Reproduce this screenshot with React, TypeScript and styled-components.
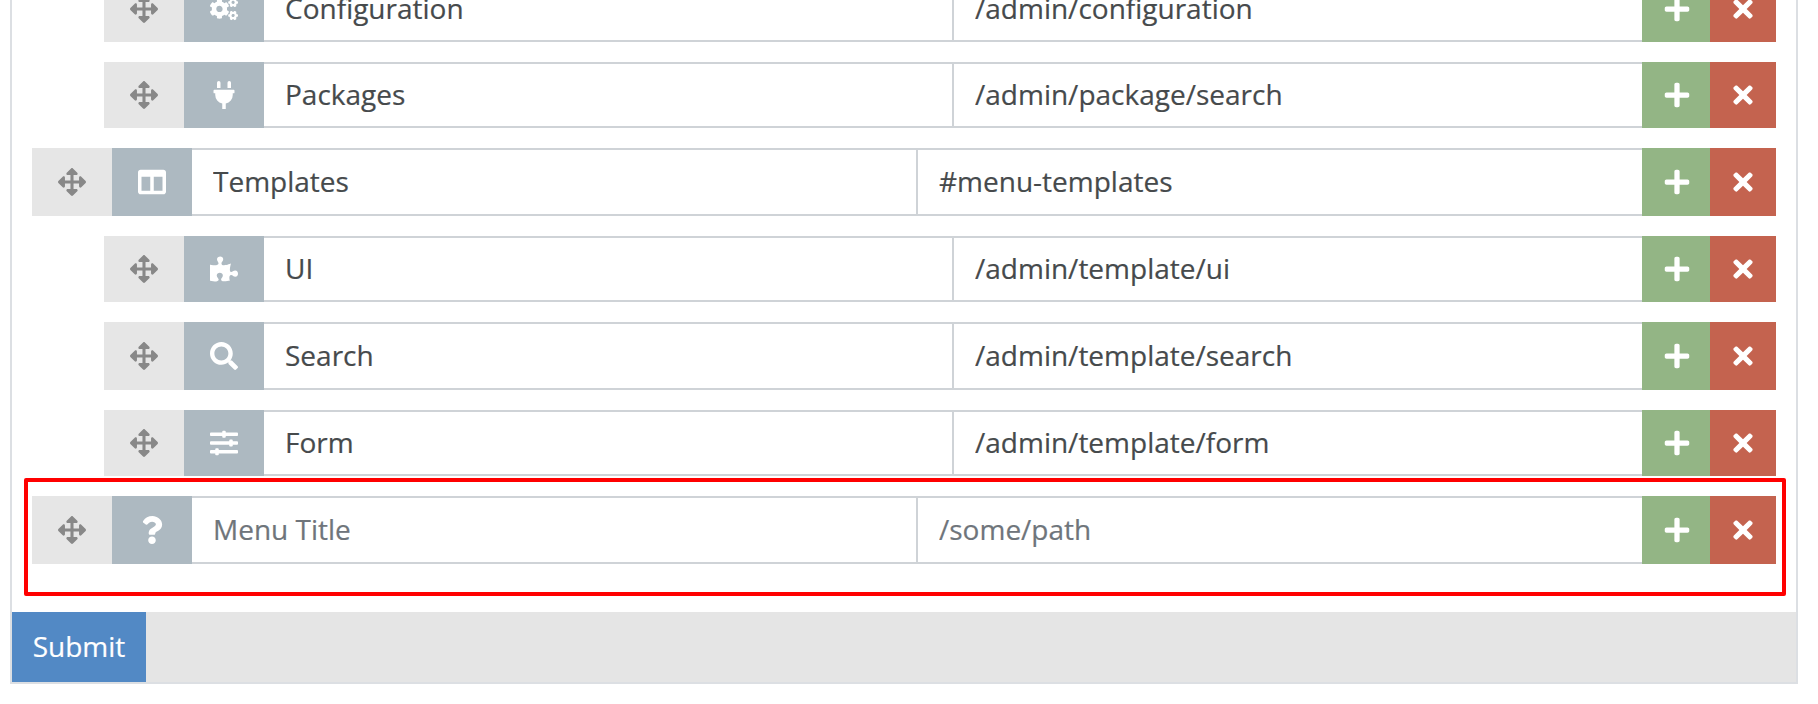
import React from "react";
import styled, { createGlobalStyle } from "styled-components";
import {
  FaArrowsAlt,
  FaCogs,
  FaPlug,
  FaColumns,
  FaPuzzlePiece,
  FaSearch,
  FaSlidersH,
  FaQuestion,
  FaPlus,
  FaTimes,
} from "react-icons/fa";

const Global = createGlobalStyle`
  html, body { margin: 0; padding: 0; height: 704px; overflow: hidden; background: #fff; }
  * { box-sizing: border-box; }
  body { font-family: "Open Sans", "Liberation Sans", sans-serif; }
`;

const Panel = styled.form`
  width: 1788px;
  margin: -24px 0 0 10px;
  border: solid #dcdfe3;
  border-width: 0 2px 2px 2px;
  background: #fff;
`;

const List = styled.div`
  display: flex;
  flex-direction: column;
  gap: 20px;
  padding: 0 20px;
`;

const Row = styled.div<{ $nested?: boolean; $tall?: boolean }>`
  display: flex;
  align-items: stretch;
  height: ${(p) => (p.$tall ? 68 : 66)}px;
  margin-left: ${(p) => (p.$nested ? 72 : 0)}px;
`;

const Handle = styled.div`
  flex: 0 0 80px;
  display: flex;
  align-items: center;
  justify-content: center;
  background: #e6e6e6;
  color: #888888;
  font-size: 28px;
`;

const IconBox = styled.div`
  flex: 0 0 80px;
  display: flex;
  align-items: center;
  justify-content: center;
  background: #adb9c1;
  color: #fff;
  font-size: 28px;
`;

const Fields = styled.div`
  flex: 1;
  min-width: 0;
  display: grid;
  grid-template-columns: 1fr 1fr;
`;

const Field = styled.input<{ $second?: boolean }>`
  width: 100%;
  min-width: 0;
  height: 100%;
  padding: 0 21px 2px;
  margin: 0;
  border: solid #cfd3d7;
  border-width: 2px 0;
  border-left-width: ${(p) => (p.$second ? 2 : 0)}px;
  ${(p) => (p.$second ? "margin-left: -1px; width: calc(100% + 1px);" : "")}
  outline: none;
  border-radius: 0;
  background: #fff;
  color: #464a4c;
  font-family: "Open Sans", "Liberation Sans", sans-serif;
  font-size: 28px;
  -webkit-text-stroke: 0.2px;
  &::placeholder { color: #6f757b; opacity: 1; }
`;

const ActionButton = styled.button`
  display: flex;
  align-items: center;
  justify-content: center;
  padding: 0;
  border: 0;
  color: #fff;
  font-size: 28px;
`;

const AddButton = styled(ActionButton)`
  flex: 0 0 68px;
  padding-left: 2px;
  background: #93b585;
`;

const RemoveButton = styled(ActionButton)`
  flex: 0 0 66px;
  background: #c4634f;
`;

const Highlight = styled.div`
  height: 118px;
  margin: 2px 10px 0 12px;
  padding: 14px 6px 0 4px;
  border: 4px solid #ff0000;
  border-radius: 2px;
`;

const Footer = styled.div`
  display: flex;
  height: 70px;
  margin-top: 16px;
  background: #e5e5e5;
`;

const Submit = styled.button`
  width: 134px;
  padding: 0 0 2px;
  border: 0;
  background: #5289c5;
  color: #fff;
  font-family: "Open Sans", "Liberation Sans", sans-serif;
  font-size: 28px;
  -webkit-text-stroke: 0.2px;
`;

type Item = {
  title?: string;
  path?: string;
  icon: React.ReactNode;
  nested?: boolean;
  tall?: boolean;
};

const MenuRow = ({ title, path, icon, nested, tall }: Item) => (
  <Row $nested={nested} $tall={tall}>
    <Handle>
      <FaArrowsAlt />
    </Handle>
    <IconBox>{icon}</IconBox>
    <Fields>
      <Field readOnly value={title ?? ""} placeholder="Menu Title" />
      <Field $second readOnly value={path ?? ""} placeholder="/some/path" />
    </Fields>
    <AddButton type="button">
      <FaPlus />
    </AddButton>
    <RemoveButton type="button">
      <FaTimes />
    </RemoveButton>
  </Row>
);

const items: Item[] = [
  { title: "Configuration", path: "/admin/configuration", icon: <FaCogs />, nested: true },
  { title: "Packages", path: "/admin/package/search", icon: <FaPlug />, nested: true },
  { title: "Templates", path: "#menu-templates", icon: <FaColumns />, tall: true },
  { title: "UI", path: "/admin/template/ui", icon: <FaPuzzlePiece />, nested: true },
  { title: "Search", path: "/admin/template/search", icon: <FaSearch />, nested: true, tall: true },
  { title: "Form", path: "/admin/template/form", icon: <FaSlidersH />, nested: true },
];

export default function App() {
  return (
    <>
      <Global />
      <Panel>
        <List>
          {items.map((item) => (
            <MenuRow key={item.title} {...item} />
          ))}
        </List>
        <Highlight>
          <MenuRow icon={<FaQuestion />} tall />
        </Highlight>
        <Footer>
          <Submit type="button">Submit</Submit>
        </Footer>
      </Panel>
    </>
  );
}
